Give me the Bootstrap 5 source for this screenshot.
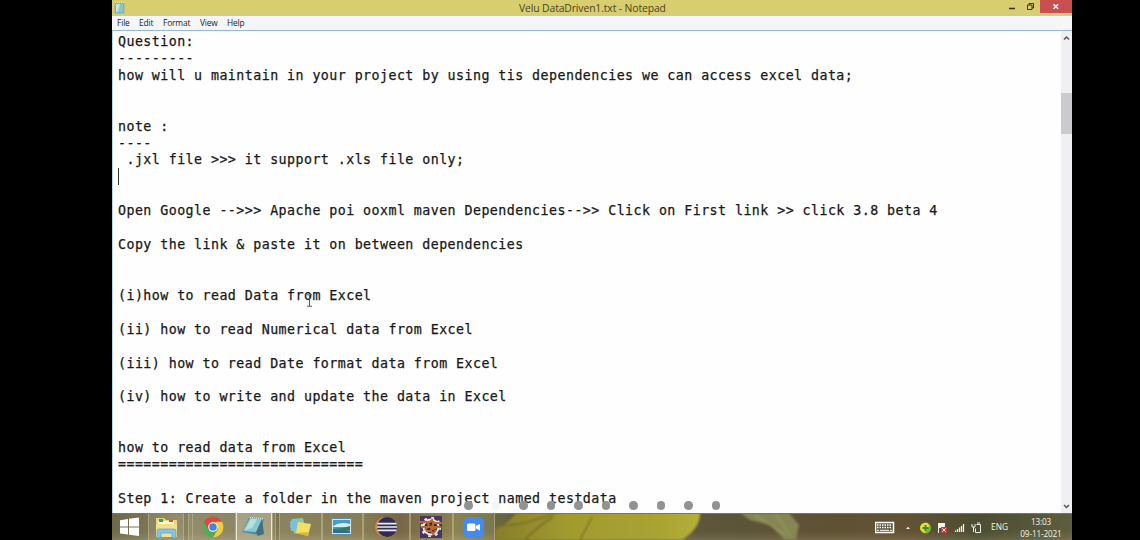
<!DOCTYPE html>
<html lang="en">
<head>
<meta charset="utf-8">
<title>Velu DataDriven1.txt - Notepad</title>
<link href="https://cdn.jsdelivr.net/npm/bootstrap@5.3.0/dist/css/bootstrap.min.css" rel="stylesheet">
<style>
body{font-family:"Open Sans","Noto Sans",sans-serif;height:540px;padding-left:112px}
.screen{width:960px;height:540px}
.titlebar{height:16px;background:#d9ce6f;color:#48441f;font-size:10.4px;letter-spacing:-.13px;line-height:16px}
.titlebar .caption{width:147px;white-space:nowrap;margin-left:394px}
.winbtns{width:64px;height:16px}
.closebtn{width:32px;height:13px;background:#c94f50}
.menus{height:15px;background:#f5f6fa;border-bottom:1px solid #8fbcdc;font-size:8.4px;letter-spacing:-.15px;line-height:14px;color:#222;padding-left:5px}
.menus span{display:block;white-space:nowrap}
.editor{height:482px;background:#fefefe;border-left:1px solid #b9d5eb}
.doc{font-family:"DejaVu Sans Mono","Liberation Mono",monospace;font-size:13.3px;letter-spacing:.446px;line-height:16.926px;color:#181818;-webkit-text-stroke:.25px #181818;padding:3px 0 0 5px;margin:0;overflow:hidden}
.caret{left:5px;top:137px;width:1px;height:17px;background:#333}
.ibeam{left:193px;top:263px}
.scroller{width:11px;background:#f0f0f2}
.thumb{height:41px;background:#cbcbcd}
.dots{left:352px;top:501px;gap:19px}
.dots i{width:8.5px;height:8.5px;border-radius:50%;background:#929292}
.dots .current{opacity:.08}
.taskbar{height:27px}
.slot{height:27px;border-left:1px solid #c4bf9888;border-right:1px solid #c4bf9888;background:#ffffff18}
.slot.active{background:#d8d8c470;border-color:#e8e8d8}
.clock{font-size:8.2px;letter-spacing:-.14px;line-height:12px;width:56px;margin:0 3px 0 6px;padding-top:3px;color:#f5f5e9;white-space:nowrap}
.lang{font-size:8.4px;color:#f5f5e9;line-height:28px;width:16px;margin-left:-10px}
</style>
</head>
<body class="bg-black m-0 overflow-hidden">
<main class="screen position-relative d-flex flex-column overflow-hidden">
  <header class="titlebar d-flex flex-shrink-0">
    <svg width="13" height="16"><path d="M3 3h9v10H3z" fill="#8bc4cc" stroke="#5a9ba7" stroke-width=".6"/><path d="M4 4h4l-2 8H4z" fill="#c8e4e3"/><path d="M3 2.5h9" stroke="#eee" stroke-dasharray="1 1"/></svg>
    <div class="caption">Velu DataDriven1.txt - Notepad</div>
    <div class="winbtns d-flex ms-auto justify-content-between">
      <svg width="32" height="16"><path d="M1 8.5h6" stroke="#302d18" stroke-width="1.5"/><path d="M19.5 5h4.5v4.5h-4.500zM21 5V3.500h4.500V8H24" fill="none" stroke="#39351b"/></svg>
      <div class="closebtn d-flex justify-content-center"><svg width="10" height="13"><path d="M2.500 4.200l4.600 4.600M7.100 4.200L2.500 8.800" stroke="#fff" stroke-width="1.500"/></svg></div>
    </div>
  </header>
  <nav class="menus d-flex flex-shrink-0">
    <span style="width:22px">File</span><span style="width:24px">Edit</span><span style="width:37px">Format</span><span style="width:27px">View</span><span>Help</span>
  </nav>
  <section class="editor d-flex flex-shrink-0 position-relative">
<pre class="doc flex-grow-1">Question:
---------
how will u maintain in your project by using tis dependencies we can access excel data;


note :
----
 .jxl file &gt;&gt;&gt; it support .xls file only;


Open Google --&gt;&gt;&gt; Apache poi ooxml maven Dependencies--&gt;&gt; Click on First link &gt;&gt; click 3.8 beta 4

Copy the link &amp; paste it on between dependencies


(i)how to read Data from Excel

(ii) how to read Numerical data from Excel

(iii) how to read Date format data from Excel

(iv) how to write and update the data in Excel


how to read data from Excel
=============================

Step 1: Create a folder in the maven project named testdata
</pre>
    <span class="caret position-absolute"></span>
    <svg class="ibeam position-absolute" width="7" height="13"><path d="M1 .8h2l.5.5.5-.5h2M3.500 1v11M1 12.200h5" fill="none" stroke="#555"/></svg>
    <div class="scroller d-flex flex-column flex-shrink-0">
      <svg width="11" height="62"><path d="M3 8.500l2.500-2.500L8 8.500" fill="none" stroke="#555" stroke-width="1.500"/></svg>
      <div class="thumb"></div>
      <svg class="mt-auto" width="11" height="14"><path d="M3 6l2.500 2.500L8 6" fill="none" stroke="#555" stroke-width="1.500"/></svg>
    </div>
  </section>
  <footer class="taskbar position-relative flex-shrink-0">
    <svg class="position-absolute top-0 start-0" width="960" height="27">
      <defs>
        <linearGradient id="wall"><stop offset="0" stop-color="#77704f"/><stop offset=".07" stop-color="#958d69"/><stop offset=".16" stop-color="#8b8158"/><stop offset=".26" stop-color="#87794a"/><stop offset=".3" stop-color="#725d36"/><stop offset=".36" stop-color="#8c8045"/><stop offset=".42" stop-color="#676744"/><stop offset=".64" stop-color="#625a3e"/><stop offset=".76" stop-color="#655536"/><stop offset=".83" stop-color="#6a5636"/><stop offset=".9" stop-color="#505034"/><stop offset="1" stop-color="#646344"/></linearGradient>
        <linearGradient id="shade" x2="0" y2="1"><stop stop-color="#303524" stop-opacity=".15"/><stop offset=".65" stop-color="#383a20" stop-opacity=".13"/><stop offset="1" stop-color="#aaa080" stop-opacity=".22"/></linearGradient>
        <linearGradient id="petal"><stop stop-color="#887d2b"/><stop offset=".35" stop-color="#a29a2e"/><stop offset=".8" stop-color="#aaa332"/><stop offset="1" stop-color="#b4b03a"/></linearGradient>
        <filter id="soft"><feGaussianBlur stdDeviation="1"/></filter>
      </defs>
      <path fill="url(#wall)" d="M0 0h960v27H0z"/><path fill="url(#shade)" d="M0 0h960v27H0z"/>
      <g filter="url(#soft)"><path d="M383 16q12-4 22-17h183q1 16-18 28H383z" fill="url(#petal)"/><path d="M384 13q28 0 62-14M413 27q10-12 28-23M468 27l12-23" fill="none" stroke="#756e28" stroke-width="1.500"/><path d="M628 0h49l10 12-3 15h-11L658 12l-20-5z" fill="#858653"/><path d="M643 2l30 20M664 2l15 22" stroke="#a1a36b"/></g>
      <path d="M0 .5h960" stroke="#617c79"/>
    </svg>
    <div class="position-relative d-flex h-100">
      <svg width="36" height="27"><path d="M8 7.200l8-1.200v7.400H8zM17 5.800l10-1.300v8.900H17zM8 14.400h8v7.200l-8-1.200zM17 14.400h10v8.700l-10-1.400z" fill="#fff"/></svg>
      <div class="slot" style="width:36px"><svg width="34" height="27"><path d="M7 5h8l2 2h11v17H7z" fill="#ecd574"/><path d="M9 8h16v3H9z" fill="#faf7df"/><path d="M10 6h4v3h-4z" fill="#469b4c"/><path d="M20 7h4v2h-4z" fill="#c65d39"/><path d="M7 11h21v13H7z" fill="#f3df8d"/><path d="M8 25v-7q0-2 2-2h15q2 0 2 2v7h-4v-5H12v5z" fill="#81c5e7" stroke="#4d99c5" stroke-width=".6"/></svg></div>
      <div class="slot ms-1 border-end-0" style="width:4px"></div>
      <div class="slot" style="width:44px"><svg width="42" height="27"><g transform="translate(20 14)"><circle r="10.400" fill="#50ad50"/><path d="M-9-5.200A10.400 10.400 0 0 1 9-5.200H0z" fill="#df4836"/><path d="M9-5.200A10.400 10.400 0 0 1 0 10.400L5 2 3-5.200z" fill="#f5cb3b"/><path d="M-9-5.200L-4.500 3 0-5.200z" fill="#df4836"/><circle r="4.800" fill="#fff"/><circle r="3.800" fill="#4384dc"/></g></svg></div>
      <div class="slot active" style="width:36px"><svg width="34" height="27"><path d="M12 5l15 1-5 16-17-3z" fill="#4d8ba0"/><path d="M13 5l13 1-6 13-14-1z" fill="#8bc8d4"/><path d="M14 6l6 0-5 9-7 2z" fill="#b9dfe1"/><path d="M25 6l2 15-6 2-2-4z" fill="#43707f"/><path d="M13 4.500l13 1" stroke="#edf0e4" stroke-dasharray="1 1"/></svg></div>
      <div class="slot" style="width:4px"></div>
      <div class="slot" style="width:43px;margin-left:3px"><svg width="41" height="27"><path d="M12 6l11-1 3 13-11 3-5-7z" fill="#8fcb8d"/><path d="M10 8l9-2 2 10-10 2z" fill="#79c0e4"/><path d="M18 9l13 2-3 12-12-3z" fill="#f4de64"/><path d="M16 20l12 3 1-4z" fill="#d4ba3e"/></svg></div>
      <div class="slot" style="width:41px"><svg width="39" height="27"><path d="M8.500 5.500h20v16H8.500z" fill="#d5e5ed" stroke="#598eaf"/><path d="M10 7h17v13H10z" fill="#489bce"/><path d="M10 13q8-5 17-2v3H10z" fill="#d4edf3"/><path d="M10 16q9 0 17-3v4l-9 2h-8z" fill="#397865"/><path d="M10 18h17v2H10z" fill="#2b6ba2"/></svg></div>
      <div class="slot" style="width:47px"><svg width="45" height="27"><circle cx="21" cy="14" r="10" fill="#d88b32"/><circle cx="23" cy="14" r="10" fill="#332a58"/><path d="M13.500 10.600h19M13 14h20M13.500 17.400h19" stroke="#eee" stroke-width="1.700"/></svg></div>
      <div class="slot" style="width:43px"><svg width="41" height="27"><path d="M9 3h22v22H9z" fill="#48345f"/><circle cx="20" cy="14" r="7.500" fill="#382d3f" stroke="#f2e9e7" stroke-width="2"/><circle cx="20" cy="14" r="9.300" fill="none" stroke="#f2e9e7" stroke-width="2" stroke-dasharray="2.800 4.500"/><path d="M8 9h11l2-2 1 3h9M10 14h20M15 18h5l2 3 3-4M15 8l3 4-4 5M23 9l-3 8 6-3" fill="none" stroke="#ba682d" stroke-width="2"/></svg></div>
      <div class="slot" style="width:42px"><svg width="40" height="27"><rect x="9" y="4" width="21" height="21" rx="6" fill="#438af1"/><rect x="13" y="10.500" width="8.500" height="7.500" rx="1.500" fill="#fff"/><path d="M22 13l4-2.300v7L22 15.500z" fill="#fff"/></svg></div>
      <div class="ms-auto d-flex">
        <svg width="126" height="27">
          <path d="M.5 9.500h18v10H.5z" fill="#605a42" stroke="#fff" stroke-width="1.500"/><path d="M2 12h15M2 14.500h15" stroke="#fff" stroke-width="1.300" stroke-dasharray="1.500 1"/><path d="M2 17.300h2m1 0h9m1 0h2" stroke="#fff"/>
          <path d="M31 16l2-2.200 2 2.200z" fill="#eee"/>
          <circle cx="50.500" cy="15" r="5.500" fill="#79b832"/><path d="M45.500 17a5.500 5.500 0 0 1 7-7l2 3-5 7z" fill="#edda32"/><path d="M50.500 12v6M47.500 15h6" stroke="#39892e" stroke-width="2"/>
          <path d="M63.500 10v10" stroke="#eee"/><path d="M64 10h6v5h-6z" fill="#f4f4ee"/><path d="M66 14h6v6h-6z" fill="#cd3439"/><path d="M67.300 15.300l3.400 3.400m0-3.400l-3.400 3.400" stroke="#fff"/>
          <path d="M80.500 19v-1.500M82.500 19v-3M84.500 19v-4.500M86.500 19v-6M88.500 19v-8" stroke="#eee" stroke-width="1.300"/>
          <path d="M101.500 11.500h4v8h-5v-4M102 10h3M97 11v3h3v-3M98.500 14v5" fill="none" stroke="#eee"/>
        </svg>
        <div class="lang">ENG</div>
        <div class="clock text-center">13:03<br>09-11-2021</div>
      </div>
    </div>
  </footer>
  <div class="dots position-absolute d-flex"><i></i><i class="current"></i><i></i><i></i><i></i><i></i><i></i><i></i><i></i><i></i></div>
</main>
<script src="https://cdn.jsdelivr.net/npm/bootstrap@5.3.0/dist/js/bootstrap.bundle.min.js"></script>
</body>
</html>
